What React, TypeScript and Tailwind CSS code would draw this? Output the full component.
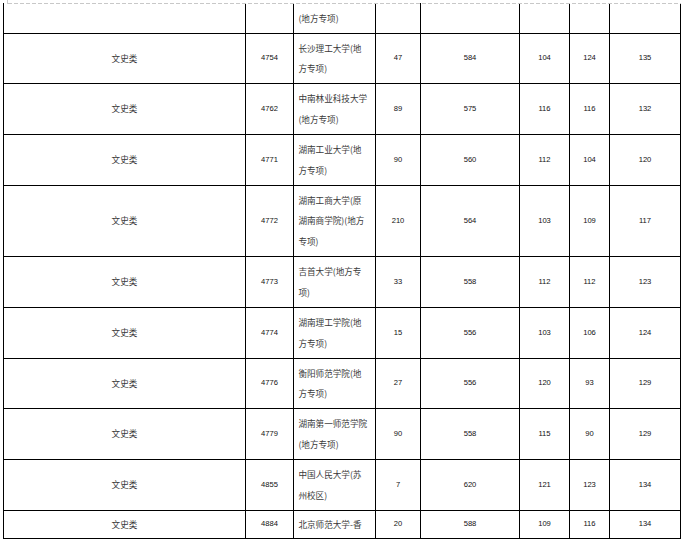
import React from "react";

type Row = {
  h: string;
  kind: string;
  code: string;
  name: string[];
  n: string[];
};

const rows: Row[] = [
  { h: "h-[50px]", kind: "文史类", code: "4754", name: ["长沙理工大学(地", "方专项)"], n: ["47", "584", "104", "124", "135"] },
  { h: "h-[51px]", kind: "文史类", code: "4762", name: ["中南林业科技大学", "(地方专项)"], n: ["89", "575", "116", "116", "132"] },
  { h: "h-[51px]", kind: "文史类", code: "4771", name: ["湖南工业大学(地", "方专项)"], n: ["90", "560", "112", "104", "120"] },
  { h: "h-[71px]", kind: "文史类", code: "4772", name: ["湖南工商大学(原", "湖南商学院)(地方", "专项)"], n: ["210", "564", "103", "109", "117"] },
  { h: "h-[51px]", kind: "文史类", code: "4773", name: ["吉首大学(地方专", "项)"], n: ["33", "558", "112", "112", "123"] },
  { h: "h-[51px]", kind: "文史类", code: "4774", name: ["湖南理工学院(地", "方专项)"], n: ["15", "556", "103", "106", "124"] },
  { h: "h-[50px]", kind: "文史类", code: "4776", name: ["衡阳师范学院(地", "方专项)"], n: ["27", "556", "120", "93", "129"] },
  { h: "h-[51px]", kind: "文史类", code: "4779", name: ["湖南第一师范学院", "(地方专项)"], n: ["90", "558", "115", "90", "129"] },
  { h: "h-[51px]", kind: "文史类", code: "4855", name: ["中国人民大学(苏", "州校区)"], n: ["7", "620", "121", "123", "134"] },
  { h: "h-[28px]", kind: "文史类", code: "4884", name: ["北京师范大学-香"], n: ["20", "588", "109", "116", "134"] },
];

const cjk = "font-['Noto_Sans_CJK_SC',sans-serif] text-[8.6px] leading-[20.4px] text-[#3a3a3a]";
const num = "font-['Liberation_Sans',Arial,sans-serif] text-[7.6px] text-[#111]";
const td = "border border-black p-0 align-middle";

export default function App() {
  return (
    <div className="relative w-[683px] h-[545px] bg-white overflow-hidden pl-[3px] pt-[3px]">
      <table className="table-fixed border-collapse w-[678px]">
        <colgroup>
          <col className="w-[242px]" />
          <col className="w-[48px]" />
          <col className="w-[82px]" />
          <col className="w-[45px]" />
          <col className="w-[99px]" />
          <col className="w-[50px]" />
          <col className="w-[40px]" />
          <col className="w-[71px]" />
        </colgroup>
        <tbody>
          <tr className="h-[30px]">
            <td className={`${td} border-t-0`}></td>
            <td className={`${td} border-t-0`}></td>
            <td className={`${td} border-t-0 pl-[4.4px] ${cjk}`}>(地方专项)</td>
            <td className={`${td} border-t-0`}></td>
            <td className={`${td} border-t-0`}></td>
            <td className={`${td} border-t-0`}></td>
            <td className={`${td} border-t-0`}></td>
            <td className={`${td} border-t-0`}></td>
          </tr>
          {rows.map((r) => (
            <tr key={r.code} className={r.h}>
              <td className={`${td} text-center ${cjk}`}>{r.kind}</td>
              <td className={`${td} text-center ${num}`}>{r.code}</td>
              <td className={`${td} pl-[4.4px] ${cjk}`}>
                {r.name.map((l, i) => (
                  <div key={i} className="whitespace-nowrap">{l}</div>
                ))}
              </td>
              {r.n.map((v, i) => (
                <td key={i} className={`${td} text-center ${num}`}>{v}</td>
              ))}
            </tr>
          ))}
        </tbody>
      </table>
      <div className="absolute left-[7px] top-0 w-[674px] h-[4px] border-l border-[#cccccc]">
        <div className="absolute left-0 right-0 bottom-0 h-px bg-[repeating-linear-gradient(90deg,#c8c8c8_0_4px,transparent_4px_6px)]"></div>
      </div>
    </div>
  );
}
